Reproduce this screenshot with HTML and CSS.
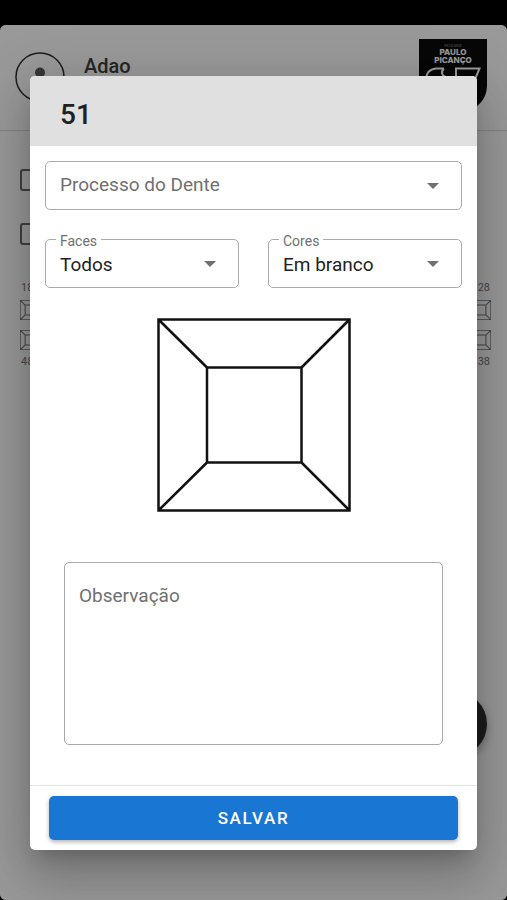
FILE: index.html
```html
<!DOCTYPE html>
<html lang="pt-BR">

<head>
    <meta charset="UTF-8">
    <meta name="viewport" content="width=device-width, initial-scale=1.0">
    <title>Odontograma</title>
    <link rel="stylesheet" href="styles.css">
</head>

<body>
    <!-- tooth drawing, reused by the chart and the dialog -->
    <svg class="sprite" aria-hidden="true">
        <symbol id="tooth" viewBox="0 0 194 194">
            <path d="M1.5 1.5H192.5V192.5H1.5ZM50 49.5H144.5V144.5H50ZM1.5 1.5L50 49.5M192.5 1.5L144.5 49.5M1.5 192.5L50 144.5M192.5 192.5L144.5 144.5" />
        </symbol>
    </svg>

    <div class="app">
        <header class="topbar">
            <svg class="avatar" viewBox="0 0 50 50" aria-hidden="true">
                <circle cx="25" cy="25" r="24" fill="none" stroke="#303030" stroke-width="1.5" />
                <circle cx="25" cy="20.5" r="5" fill="#5c5c5c" />
                <path d="M17 36c0-5 4-8 8-8s8 3 8 8z" fill="#5c5c5c" />
            </svg>
            <span class="patient">Adao</span>
            <svg class="logo" viewBox="0 0 68 76" role="img" aria-label="Faculdade Paulo Picanço">
                <path d="M0 0H68V46C68 64 54 73 34 76C14 73 0 64 0 46Z" fill="#0c0c0c" />
                <text class="logo-small" x="34" y="8">FACULDADE</text>
                <text class="logo-name" x="34" y="16">PAULO</text>
                <text class="logo-name" x="34" y="24">PICANÇO</text>
                <path d="M25 29.5H17C10 30 7 34 7 42M25 29.5C21 33 23 38 29 38H37V29.5H60.5L52 50" fill="none" stroke="#fff" stroke-width="2" />
            </svg>
        </header>

        <main class="chart">
            <input class="check" type="checkbox" aria-label="Dentes decíduos">
            <input class="check" type="checkbox" aria-label="Dentes permanentes">
            <div class="teeth">
                <div class="tooth-pair">
                    <span>18</span>
                    <svg class="tooth"><use href="#tooth" /></svg>
                    <svg class="tooth"><use href="#tooth" /></svg>
                    <span>48</span>
                </div>
                <div class="tooth-pair tooth-pair-right">
                    <span>28</span>
                    <svg class="tooth"><use href="#tooth" /></svg>
                    <svg class="tooth"><use href="#tooth" /></svg>
                    <span>38</span>
                </div>
            </div>
        </main>

        <button class="fab" type="button" aria-label="Adicionar"></button>

        <div class="overlay">
            <form class="dialog" role="dialog" aria-labelledby="dialogTitle">
                <h1 class="dialog-title" id="dialogTitle">51</h1>

                <div class="dialog-body">
                    <div class="field">
                        <select id="processo">
                            <option value=""></option>
                        </select>
                        <label class="label-inside" for="processo">Processo do Dente</label>
                        <svg class="arrow" viewBox="0 0 12 6" aria-hidden="true"><path d="M0 0H12L6 6Z" /></svg>
                    </div>

                    <div class="row">
                        <div class="field">
                            <select id="faces">
                                <option>Todos</option>
                            </select>
                            <label class="label-top" for="faces">Faces</label>
                            <svg class="arrow" viewBox="0 0 12 6" aria-hidden="true"><path d="M0 0H12L6 6Z" /></svg>
                        </div>
                        <div class="field">
                            <select id="cores">
                                <option>Em branco</option>
                            </select>
                            <label class="label-top" for="cores">Cores</label>
                            <svg class="arrow" viewBox="0 0 12 6" aria-hidden="true"><path d="M0 0H12L6 6Z" /></svg>
                        </div>
                    </div>

                    <svg class="tooth-large" stroke-width="2.5"><use href="#tooth" /></svg>

                    <div class="field notes">
                        <textarea id="observacao"></textarea>
                        <label class="label-inside" for="observacao">Observação</label>
                    </div>
                </div>

                <div class="dialog-actions">
                    <button class="save" type="button">SALVAR</button>
                </div>
            </form>
        </div>
    </div>
</body>

</html>
```
FILE: styles.css
```css
* {
    box-sizing: border-box;
}

body {
    font-family: Roboto, "Liberation Sans", sans-serif;
    margin: 0;
    padding-top: 25px;
    min-height: 100vh;
    display: flex;
    flex-direction: column;
    background-color: #000;
    color: #212121;
}

.sprite {
    position: absolute;
    width: 0;
    height: 0;
}

.app {
    position: relative;
    flex: 1;
    border-radius: 6px;
    overflow: hidden;
    background-color: #fff;
}

/* page behind the dialog */
.topbar {
    display: flex;
    align-items: flex-start;
    height: 106px;
    padding: 14px 20px 0 15px;
    border-bottom: 1px solid #dcdcdc;
}

.avatar {
    width: 50px;
    height: 50px;
    margin-top: 13px;
}

.patient {
    flex: 1;
    margin: 15px 0 0 19px;
    font-size: 20px;
    line-height: 24px;
    font-weight: 500;
    color: #404040;
}

.logo {
    width: 68px;
    height: 76px;
}

.logo text {
    font-family: Inter, sans-serif;
    text-anchor: middle;
    fill: #fff;
}

.logo-name {
    font-size: 8px;
    font-weight: 800;
}

.logo .logo-small {
    font-size: 3px;
    fill: #999;
}

.chart {
    padding: 38px 16px 0 20px;
}

.check {
    appearance: none;
    display: block;
    width: 22px;
    height: 22px;
    margin: 0 0 32px;
    border: 2px solid #6b6b6b;
    border-radius: 3px;
}

.teeth {
    display: flex;
    justify-content: space-between;
    padding-top: 4px;
    font-size: 11px;
    line-height: 14px;
    color: #777;
}

.tooth-pair {
    display: flex;
    flex-direction: column;
}

.tooth-pair-right {
    align-items: flex-end;
}

.tooth-pair span {
    padding: 0 1px;
}

.tooth {
    width: 20px;
    height: 20px;
    margin: 5px 0;
    fill: none;
    stroke: #777;
    stroke-width: 10px;
}

.fab {
    position: absolute;
    right: 20px;
    bottom: 143px;
    width: 66px;
    height: 66px;
    border: none;
    border-radius: 50%;
    background-color: #303030;
    box-shadow: 0 4px 8px rgba(0, 0, 0, 0.3);
}

/* dialog */
.overlay {
    position: absolute;
    inset: 0;
    display: flex;
    align-items: center;
    justify-content: center;
    padding: 1px 30px 0;
    background-color: rgba(0, 0, 0, 0.4);
}

.dialog {
    width: 100%;
    border-radius: 5px;
    overflow: hidden;
    background-color: #fff;
    box-shadow: 0 13px 18px -8px rgba(0, 0, 0, 0.2),
        0 29px 46px 4px rgba(0, 0, 0, 0.14),
        0 11px 56px 10px rgba(0, 0, 0, 0.12);
}

.dialog-title {
    margin: 0;
    padding: 23px 30px 15px;
    font-size: 28px;
    line-height: 32px;
    font-weight: 500;
    background-color: #e0e0e0;
}

.dialog-body {
    display: flex;
    flex-direction: column;
    padding: 15px 15px 40px;
}

.row {
    display: grid;
    grid-template-columns: 1fr 1fr;
    gap: 29px;
    margin-top: 29px;
}

.field {
    position: relative;
}

.field select,
.field textarea {
    appearance: none;
    display: block;
    width: 100%;
    margin: 0;
    padding: 0 14px;
    border: 1px solid #aaa;
    border-radius: 5px;
    background-color: #fff;
    color: #212121;
    font-family: inherit;
    font-size: 19px;
}

.field select {
    height: 49px;
    padding-top: 2px;
}

.field textarea {
    height: 183px;
    padding: 20px 14px;
    resize: none;
}

.label-inside {
    position: absolute;
    top: 12px;
    left: 15px;
    font-size: 19px;
    line-height: 24px;
    color: #707070;
    pointer-events: none;
}

.label-top {
    position: absolute;
    top: -7px;
    left: 11px;
    padding: 0 4px;
    font-size: 14px;
    line-height: 18px;
    color: #707070;
    background-color: #fff;
}

.arrow {
    position: absolute;
    top: 22px;
    right: 23px;
    width: 12px;
    height: 6px;
    fill: #707070;
    pointer-events: none;
}

.tooth-large {
    align-self: center;
    width: 194px;
    height: 194px;
    margin: 30px 0 50px;
    fill: none;
    stroke: #111;
}

.notes {
    margin: 0 19px;
}

.notes .label-inside {
    top: 22px;
}

.dialog-actions {
    padding: 10px 19px;
    border-top: 1px solid #e4e4e4;
}

.save {
    display: block;
    width: 100%;
    height: 44px;
    border: none;
    border-radius: 5px;
    background-color: #1976d2;
    color: #fff;
    font-family: inherit;
    font-size: 17px;
    font-weight: 500;
    letter-spacing: 0.1em;
    box-shadow: 0 2px 4px rgba(0, 0, 0, 0.3);
    cursor: pointer;
}
```
